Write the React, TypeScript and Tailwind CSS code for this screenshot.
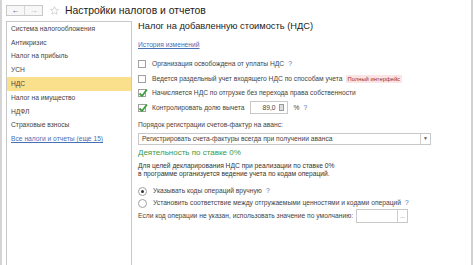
import React from "react";

const menu = [
  "Система налогообложения",
  "Антикризис",
  "Налог на прибыль",
  "УСН",
  "НДС",
  "Налог на имущество",
  "НДФЛ",
  "Страховые взносы",
];

function Check({ checked }: { checked?: boolean }) {
  return (
    <span className="relative mr-[6px] inline-block h-[8px] w-[8px] shrink-0 border border-[#a0a0a0] bg-white">
      {checked && (
        <svg viewBox="0 0 10 10" className="absolute left-[-1px] top-[-2px] h-[10px] w-[10px]">
          <path d="M1.5 5.5 L4 8 L9 1.5" fill="none" stroke="#3f9d3f" strokeWidth="1.8" />
        </svg>
      )}
    </span>
  );
}

function Radio({ checked }: { checked?: boolean }) {
  return (
    <span className="mr-[6px] flex h-[9px] w-[9px] shrink-0 items-center justify-center rounded-full border border-[#a0a0a0] bg-white">
      {checked && <span className="h-[3px] w-[3px] rounded-full bg-[#333]" />}
    </span>
  );
}

function Q() {
  return <span className="ml-[4px] text-[#4a6fb5]">?</span>;
}

export default function App() {
  return (
    <div
      className="flex h-[265px] w-[474px] overflow-hidden bg-white text-[6.7px] text-[#444]"
      style={{ fontFamily: '"Liberation Sans", Arial, sans-serif' }}
    >
      <div className="w-[2px] bg-[#d4d4d4]" />

      <div className="flex w-[469px] flex-col">
        {/* header */}
        <div className="flex h-[21px] items-center pl-[4px]">
          <div className="flex h-[11px] w-[37px] border border-[#c8c8c8] bg-[#f7f7f7]">
            <span className="flex flex-1 items-center justify-center border-r border-[#d8d8d8] text-[8px] leading-none text-[#333]">
              ←
            </span>
            <span className="flex flex-1 items-center justify-center text-[8px] leading-none text-[#aaa]">
              →
            </span>
          </div>
          <svg viewBox="0 0 10 10" className="ml-[7px] h-[9px] w-[9px]">
            <path
              d="M5 0.7 L6.3 3.6 L9.4 3.9 L7 6 L7.7 9.1 L5 7.5 L2.3 9.1 L3 6 L0.6 3.9 L3.7 3.6 Z"
              fill="none"
              stroke="#c9c9c9"
              strokeWidth="0.8"
            />
          </svg>
          <span className="ml-[6px] text-[10.4px] text-[#222]">Настройки налогов и отчетов</span>
        </div>

        <div className="flex flex-1">
          {/* left list */}
          <div className="ml-[4px] w-[126px] border border-b-0 border-[#c8c8c8]">
            {menu.map((m) => (
              <div
                key={m}
                className={
                  "flex h-[13.8px] items-center pl-[4px] " + (m === "НДС" ? "bg-[#fae08c]" : "")
                }
              >
                {m}
              </div>
            ))}
            <div className="flex h-[13.8px] items-center pl-[4px] text-[#4a6fb5] underline">
              Все налоги и отчеты (еще 15)
            </div>
          </div>

          {/* content */}
          <div className="flex flex-1 flex-col pl-[6px]">
            <div className="mt-[-1px] flex h-[14px] items-center text-[9.3px] text-[#222]">
              Налог на добавленную стоимость (НДС)
            </div>
            <div className="mt-[5px] flex h-[12px] items-center text-[#4a6fb5] underline">История изменений</div>

            <div className="mt-[6px] flex h-[14.5px] items-center">
              <Check />
              Организация освобождена от уплаты НДС
              <Q />
            </div>
            <div className="flex h-[14.5px] items-center">
              <Check />
              Ведется раздельный учет входящего НДС по способам учета
              <span className="ml-[3px] bg-[#fde4e4] px-[2px] text-[5.8px] leading-[8px] text-[#9b2a2a]">
                Полный интерфейс
              </span>
            </div>
            <div className="flex h-[14.5px] items-center">
              <Check checked />
              Начисляется НДС по отгрузке без перехода права собственности
            </div>
            <div className="flex h-[14.5px] items-center">
              <Check checked />
              Контролировать долю вычета
              <div className="ml-[5px] flex h-[13px] w-[38px] items-center justify-end border border-[#c8c8c8] pr-[3px]">
                <span className="mr-[3px]">89,0</span>
                <span className="h-[7px] w-[5px] border border-[#999] bg-[#ddd]" />
              </div>
              <span className="ml-[6px]">%</span>
              <Q />
            </div>

            <div className="mt-[4px] flex h-[12px] items-center">Порядок регистрации счетов-фактур на аванс:</div>
            <div className="mt-[2px] flex h-[12px] w-[293px] border border-[#c8c8c8]">
              <span className="flex flex-1 items-center pl-[3px]">
                Регистрировать счета-фактуры всегда при получении аванса
              </span>
              <span className="flex w-[10px] items-center justify-center border-l border-[#d0d0d0] text-[5px] text-[#555]">
                ▼
              </span>
            </div>

            <div className="mt-[2px] flex h-[12px] items-center text-[8px] text-[#3a9a48]">Деятельность по ставке 0%</div>
            <div className="mt-[3px] leading-[7.5px] text-[#333]">
              Для целей декларирования НДС при реализации по ставке 0%
              <br />в программе организуется ведение учета по кодам операций.
            </div>

            <div className="mt-[8px] flex h-[12px] items-center">
              <Radio checked />
              Указывать коды операций вручную
              <Q />
            </div>
            <div className="flex h-[12px] items-center">
              <Radio />
              Установить соответствие между отгружаемыми ценностями и кодами операций
              <Q />
            </div>
            <div className="flex h-[14px] items-center">
              Если код операции не указан, использовать значение по умолчанию:
              <div className="ml-[3px] flex h-[14px] w-[52px] border border-[#c8c8c8]">
                <span className="flex-1" />
                <span className="flex w-[10px] items-center justify-center border-l border-[#d0d0d0] text-[6px] leading-none text-[#555]">
                  ...
                </span>
              </div>
            </div>
          </div>
        </div>
      </div>

      <div className="w-[2px] bg-[#d0d0d0]" />
    </div>
  );
}
